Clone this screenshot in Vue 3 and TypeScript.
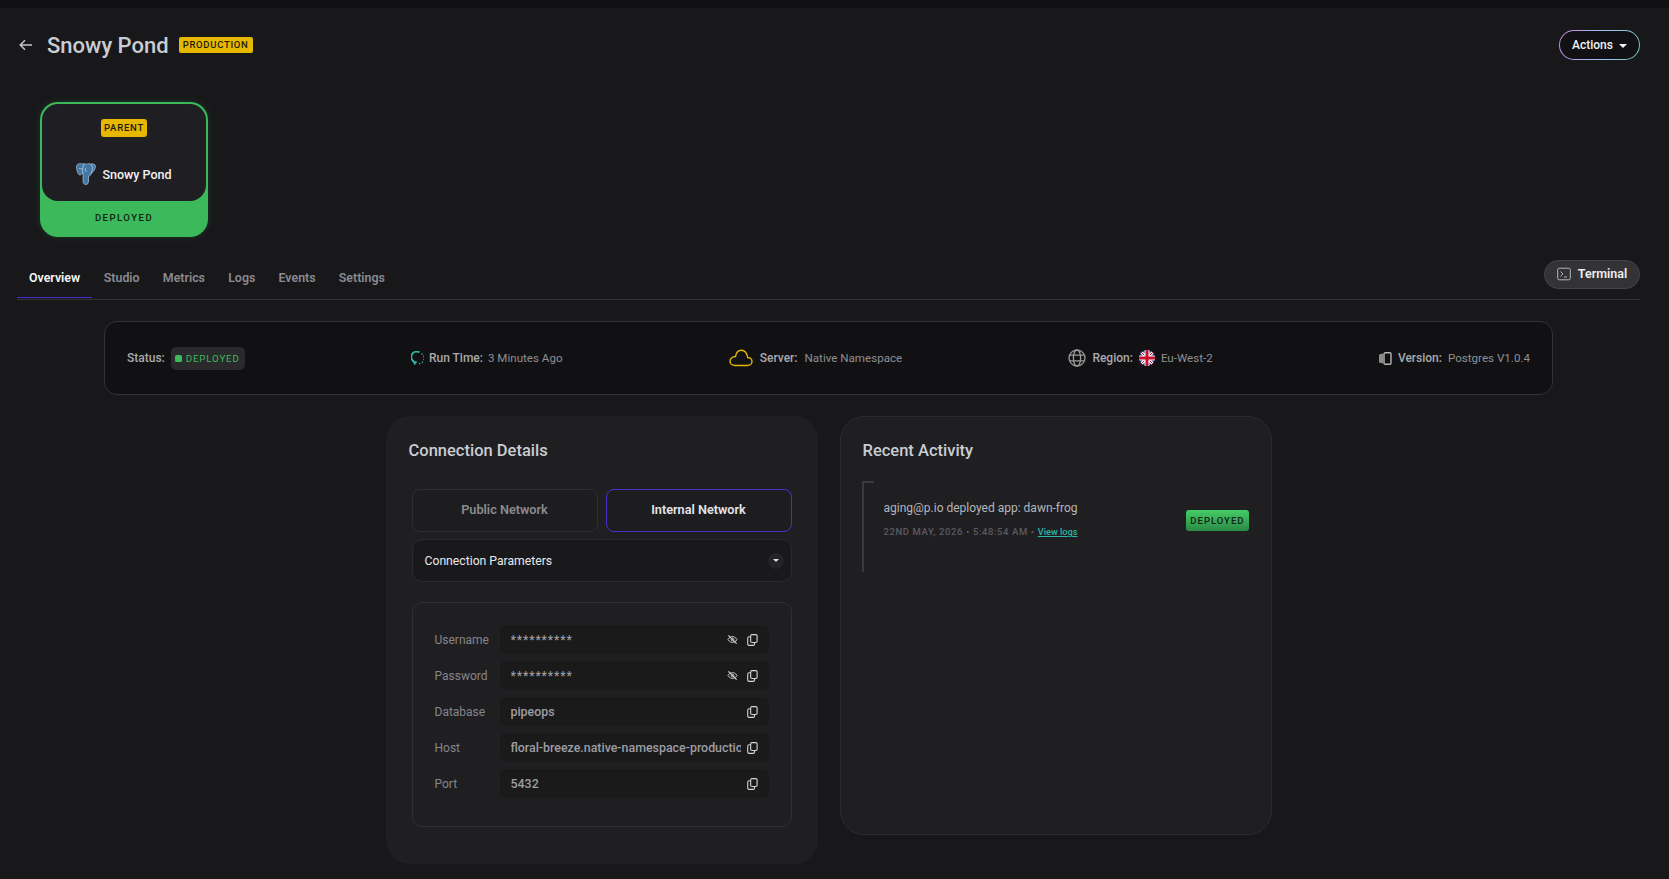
<template>
  <div class="page">
    <div class="topbar"></div>
    <div class="content">
      <header class="head">
        <svg class="back" viewBox="0 0 14 12" fill="none" stroke="#c4c4c8" stroke-width="1.5">
          <path d="M13 6H1.5M6 1.2 1.2 6 6 10.8" />
        </svg>
        <h1 class="head__title">Snowy Pond</h1>
        <span class="tag tag--prod">PRODUCTION</span>
        <button class="actions">Actions <span class="caret"></span></button>
      </header>

      <div class="node">
        <div class="node__inner">
          <span class="tag tag--parent">PARENT</span>
          <div class="node__name">
            <svg class="pg" viewBox="0 0 20 22">
              <path
                d="M6 1C3 0 .5 1 .5 4c0 3 1.500 7 3 8 1 .5 2-1 2.500-2l1 1v7c0 2.500 1.300 3.500 3 3.500s2.500-1.500 2.500-3.500v-5c1.500 0 2.500-1 2.300-2 1.700-1.500 4.700-4.500 4.700-7.500 0-2.500-2.500-3-5-2.500-1.500-.5-3-.5-4 .2C9 .5 7.500.7 6 1z"
                fill="#3f77a8"
                stroke="#c9d6e2"
                stroke-width=".6"
              />
              <path
                d="M8.500 1.200C6.800 3 6.300 6 6.600 8.500c.1 1 .2 1.500.4 2.500M14.500 1c2 1.500 2.300 4.300 1.500 6.800-.4 1.200-1.200 2.200-1.200 3.200M10.500 5c-1 .2-1.500 1-1.300 2.300.2 1 1 1.300 1.800 1M3 5.500c1 .5 2 .5 3 .2"
                fill="none"
                stroke="#e4ebf1"
                stroke-width=".6"
              />
            </svg>
            <span>Snowy Pond</span>
          </div>
        </div>
        <div class="node__status">DEPLOYED</div>
      </div>

      <div class="tabs">
        <a v-for="t in tabs" :key="t" class="tab" :class="{ 'tab--on': t === 'Overview' }">{{ t }}</a>
        <button class="terminal">
          <svg viewBox="0 0 14 14" width="14" height="14" fill="none" stroke="#b5b5b8" stroke-width="1">
            <rect x=".7" y="1.200" width="12.600" height="11.600" rx="1.500" />
            <path d="M3.500 4.500 6 7l-2.500 2.500M7 10h3" />
          </svg>
          Terminal
        </button>
      </div>

      <section class="status">
        <div class="status__item">
          <b>Status:</b>
          <span class="pill"><i></i>DEPLOYED</span>
        </div>
        <div class="status__item status__item--run">
          <svg viewBox="0 0 13 15" width="13" height="15" fill="none">
            <path d="M8.500 1.300A5.400 5.400 0 0 0 3 10.800" stroke="#2fb5a5" stroke-width="1.800" />
            <path d="M1 9.600 3.600 14.300 6.400 10.800z" fill="#2fb5a5" />
            <path d="M10.500 2.600A5.400 5.400 0 0 1 7.300 12.600" stroke="#2fb5a5" stroke-width="1.300" stroke-dasharray="1.400 1.600" />
          </svg>
          <b>Run Time:</b><span>3 Minutes Ago</span>
        </div>
        <div class="status__item status__item--cloud">
          <svg viewBox="0 0 24 18" width="24" height="18" fill="none" stroke="#e6b800" stroke-width="1.400">
            <path d="M6 16.500h12.500c2.500 0 4.500-1.800 4.500-4 0-2.300-2-4-4.300-4C17.900 4 15.300 1.200 12.500 1.200 9.300 1.200 7 4 6.500 7.500 3.300 7.700 1 9.700 1 12.300c0 2.400 2.200 4.200 5 4.200z" />
          </svg>
          <b>Server:</b><span>Native Namespace</span>
        </div>
        <div class="status__item">
          <svg viewBox="0 0 18 18" width="18" height="18" fill="none" stroke="#9a9a9a" stroke-width="1.300">
            <circle cx="9" cy="9" r="8" />
            <ellipse cx="9" cy="9" rx="3.600" ry="8" />
            <path d="M1.500 6.200h15M1.500 11.800h15" />
          </svg>
          <b>Region:</b>
          <svg class="flag" viewBox="0 0 16 16" width="16" height="16">
            <defs>
              <clipPath id="flagc"><circle cx="8" cy="8" r="8" /></clipPath>
            </defs>
            <g clip-path="url(#flagc)">
              <rect width="16" height="16" fill="#1c3578" />
              <path d="M0 0 16 16M16 0 0 16" stroke="#fff" stroke-width="3" />
              <path d="M0 0 16 16M16 0 0 16" stroke="#c8102e" stroke-width="1" />
              <path d="M8 0v16M0 8h16" stroke="#fff" stroke-width="5" />
              <path d="M8 0v16M0 8h16" stroke="#c8102e" stroke-width="3" />
            </g>
          </svg>
          <span>Eu-West-2</span>
        </div>
        <div class="status__item">
          <svg viewBox="0 0 13 13" width="13" height="13" fill="none">
            <rect x="5" y=".8" width="7" height="11.400" rx="1.200" stroke="#b5b5b5" stroke-width="1.400" />
            <path d="M0 2.500 4 1.500v10l-4-1z" fill="#8c8c8c" />
          </svg>
          <b>Version:</b><span>Postgres V1.0.4</span>
        </div>
      </section>

      <div class="cards">
        <section class="card card--conn">
          <h2 class="card__title">Connection Details</h2>
          <div class="net">
            <button class="net__btn">Public Network</button>
            <button class="net__btn net__btn--on">Internal Network</button>
          </div>
          <div class="params">
            <span>Connection Parameters</span>
            <span class="params__drop"><span class="caret caret--sm"></span></span>
          </div>
          <div class="creds">
            <div v-for="r in rows" :key="r.label" class="cred">
              <label>{{ r.label }}</label>
              <div class="cred__field">
                <span class="cred__val" :class="{ 'cred__val--mask': r.hidden }">{{ r.value }}</span>
                <svg v-if="r.hidden" class="cred__eye" viewBox="0 0 12 12" fill="none" stroke="#cfcfcf" stroke-width="1">
                  <path d="M1 6s1.800-3.200 5-3.200S11 6 11 6 9.200 9.200 6 9.200 1 6 1 6z" />
                  <circle cx="6" cy="6" r="1.500" />
                  <path d="M1.500 1.500l9 9" stroke-width="1.300" />
                </svg>
                <svg class="cred__copy" viewBox="0 0 12 13" fill="none" stroke="#d5d5d5" stroke-width="1.200">
                  <rect x="4" y=".6" width="7" height="8.600" rx="1.300" />
                  <path d="M4 3H2.300C1.300 3 .8 3.500 .8 4.500v6.400c0 1 .5 1.500 1.500 1.500h4.400c1 0 1.500-.5 1.500-1.500V9.200" />
                </svg>
              </div>
            </div>
          </div>
        </section>

        <section class="card card--activity">
          <h2 class="card__title">Recent Activity</h2>
          <div class="event">
            <div class="event__body">
              <p class="event__msg">aging@p.io deployed app: dawn-frog</p>
              <p class="event__meta">22ND MAY, 2026 • 5:48:54 AM <em>•</em> <a>View logs</a></p>
            </div>
            <span class="deployed">DEPLOYED</span>
          </div>
        </section>
      </div>
    </div>
  </div>
</template>

<script setup lang="ts">
interface CredRow {
  label: string;
  value: string;
  hidden?: boolean;
}

const tabs: string[] = ['Overview', 'Studio', 'Metrics', 'Logs', 'Events', 'Settings'];

const rows: CredRow[] = [
  { label: 'Username', value: '**********', hidden: true },
  { label: 'Password', value: '**********', hidden: true },
  { label: 'Database', value: 'pipeops' },
  { label: 'Host', value: 'floral-breeze.native-namespace-production' },
  { label: 'Port', value: '5432' },
];
</script>

<style>
html,
body {
  background: #18181b;
}
</style>

<style scoped>
.page {
  min-height: 879px;
  background: #18181b;
  font-family: Roboto, "Liberation Sans", sans-serif;
  color: #ccc;
}
.topbar {
  height: 8px;
  background: #111113;
}
.content {
  padding: 0 29px 0 17px;
}
button {
  font-family: inherit;
  cursor: pointer;
}
.head {
  display: flex;
  align-items: center;
  padding-top: 22px;
  height: 52px;
  box-sizing: border-box;
}
.back {
  width: 14px;
  height: 12px;
  margin: 0 14px 0 2px;
}
.head__title {
  margin: 0 10px 0 0;
  font-size: 22px;
  font-weight: 500;
  color: #c9cdd3;
}
.tag {
  background: #e6b800;
  color: #1c1a10;
  border-radius: 2px;
  font-size: 9.500px;
  font-weight: 500;
  letter-spacing: 0.700px;
  line-height: 16px;
  padding: 0 4px;
}
.actions {
  margin-left: auto;
  width: 81px;
  height: 30px;
  border-radius: 15px;
  border: 1px solid transparent;
  background: linear-gradient(#111113, #111113) padding-box,
    linear-gradient(100deg, #c58be8, #9cc4ee 60%, #6ec6b8) border-box;
  color: #f2f2f2;
  font-size: 12px;
  font-weight: 500;
  padding: 0;
}
.caret {
  display: inline-block;
  margin-left: 3px;
  vertical-align: middle;
  border: 4px solid transparent;
  border-top-color: #f2f2f2;
  border-bottom: 0;
}
.caret--sm {
  margin: 0;
  border-width: 3px;
  border-bottom: 0;
  border-top-color: #ddd;
}
.node {
  margin: 42px 0 0 23px;
  width: 168px;
  height: 135px;
  box-sizing: border-box;
  background: #3cb95a;
  border-radius: 18px;
  padding: 2px 2px 0;
  box-shadow: 0 0 6px rgba(60, 185, 90, 0.2);
}
.node__inner {
  height: 97px;
  box-sizing: border-box;
  background: #1f1f23;
  border-radius: 16px;
  padding-top: 12px;
  text-align: center;
}
.tag--parent {
  display: inline-block;
  line-height: 18px;
  border-radius: 3px;
  font-size: 9.500px;
  letter-spacing: 0.800px;
  padding: 0 3px;
}
.node__name {
  display: flex;
  justify-content: center;
  align-items: center;
  gap: 6px;
  margin-top: 26px;
  font-size: 12.500px;
  font-weight: 500;
  color: #f2f2f2;
}
.pg {
  width: 20px;
  height: 22px;
}
.node__status {
  text-align: center;
  font-size: 9.500px;
  font-weight: 500;
  letter-spacing: 1.500px;
  color: #10240f;
  line-height: 33px;
}
.tabs {
  display: flex;
  align-items: flex-start;
  margin-top: 23px;
  height: 40px;
  box-sizing: border-box;
  border-bottom: 1px solid #333336;
}
.tab {
  height: 38px;
  box-sizing: border-box;
  padding: 10px 11.600px 0;
  font-size: 12.400px;
  line-height: 16px;
  font-weight: 600;
  color: #8a8a90;
}
.tab--on {
  padding: 10px 12px 0;
  color: #f5f5f5;
  border-bottom: 1px solid #4a2fd0;
}
.terminal {
  margin-left: auto;
  display: flex;
  align-items: center;
  gap: 7px;
  width: 96px;
  height: 29px;
  justify-content: center;
  border-radius: 15px;
  border: 1px solid #46464a;
  background: #333336;
  color: #eee;
  font-size: 12.500px;
  line-height: 14px;
  font-weight: 600;
  padding: 0 0 1px;
}
.status {
  margin: 21px 0 0 87px;
  width: 1449px;
  height: 74px;
  box-sizing: border-box;
  border: 1px solid #333336;
  border-radius: 13px;
  background: #111113;
  padding: 0 22px;
  display: flex;
  align-items: center;
  justify-content: space-between;
  font-size: 11.600px;
}
.status__item {
  display: flex;
  align-items: center;
  gap: 6px;
  color: #8f8f93;
}
.status__item--run {
  gap: 5px;
}
.status__item--cloud {
  gap: 7px;
}
.status__item b {
  font-size: 12px;
  font-weight: 500;
  color: #a9a9ad;
}
.flag {
  flex: none;
}
.pill {
  display: flex;
  align-items: center;
  gap: 4px;
  background: #2a2a2c;
  border-radius: 5px;
  height: 23px;
  padding: 0 5px 0 4px;
  color: #3cb95a;
  font-size: 9.800px;
  letter-spacing: 0.800px;
}
.pill i {
  width: 7px;
  height: 7px;
  border-radius: 1.500px;
  background: #3cb95a;
}
.cards {
  display: flex;
  justify-content: center;
  align-items: flex-start;
  gap: 22px;
  margin-top: 21px;
}
.card {
  width: 432px;
  box-sizing: border-box;
  background: #1f1f22;
  border-radius: 24px;
  padding-top: 23px;
}
.card--conn {
  height: 448px;
  padding-left: 26px;
  padding-right: 26px;
}
.card--activity {
  height: 419px;
  border: 1px solid #2b2b2f;
  padding: 22px 22px 0 22px;
}
.card__title {
  margin: 0;
  font-size: 16.500px;
  line-height: 24px;
  font-weight: 500;
  color: #c9cdd3;
}
.card--conn .card__title {
  margin-left: -3px;
}
.net {
  display: grid;
  grid-template-columns: 186px 186px;
  gap: 8px;
  margin-top: 26px;
}
.net__btn {
  height: 43px;
  border-radius: 8px;
  border: 1px solid #2e2e32;
  background: #1d1d20;
  color: #8a8a8e;
  font-size: 12.700px;
  line-height: 14px;
  font-weight: 600;
  padding: 0 0 1px;
}
.net__btn--on {
  border-color: #4a2fd0;
  color: #e6e6e8;
}
.params {
  margin-top: 7px;
  height: 43px;
  box-sizing: border-box;
  border: 1px solid #2b2b2f;
  border-radius: 10px;
  background: #19191c;
  display: flex;
  align-items: center;
  justify-content: space-between;
  padding: 0 7px 0 12px;
  font-size: 12.200px;
  font-weight: 400;
  color: #e8e8ea;
}
.params__drop {
  width: 16px;
  height: 16px;
  border-radius: 50%;
  background: #242427;
  display: flex;
  align-items: center;
  justify-content: center;
}
.creds {
  margin-top: 20px;
  height: 225px;
  box-sizing: border-box;
  border: 1px solid #2f2f33;
  border-radius: 10px;
  padding: 22px 22px 0;
  display: flex;
  flex-direction: column;
  gap: 7px;
}
.cred {
  display: flex;
  align-items: center;
}
.cred label {
  width: 65px;
  font-size: 12px;
  color: #85858a;
}
.cred__field {
  flex: 1;
  min-width: 0;
  height: 29px;
  box-sizing: border-box;
  background: #1a1a1b;
  border-radius: 6px;
  display: flex;
  align-items: center;
  padding: 0 11px;
}
.cred__val {
  flex: 1;
  min-width: 0;
  overflow: hidden;
  white-space: nowrap;
  font-size: 12.400px;
  font-weight: 500;
  color: #9d9da2;
}
.cred__val--mask {
  font-size: 12px;
  letter-spacing: 0.900px;
}
.cred__eye {
  width: 11px;
  height: 11px;
  margin-right: 9px;
}
.cred__copy {
  flex: none;
  width: 11px;
  height: 12px;
  margin-left: 6px;
}
.cred__eye + .cred__copy {
  margin-left: 0;
}
.event {
  position: relative;
  margin: 18px 0 0 -1px;
  height: 91px;
  box-sizing: border-box;
  border-left: 2px solid #3a3a3e;
  padding: 0 0 0 20px;
  display: flex;
  justify-content: space-between;
}
.event::before {
  content: "";
  position: absolute;
  left: 0;
  top: 0;
  width: 10px;
  height: 2px;
  background: #3a3a3e;
}
.event__msg {
  margin: 18px 0 0;
  font-size: 12px;
  line-height: 18px;
  color: #b5b5ba;
}
.event__meta {
  margin: 8px 0 0;
  font-size: 9.500px;
  line-height: 14px;
  letter-spacing: 0.600px;
  color: #5b5b60;
  font-weight: 500;
}
.event__meta em {
  font-style: normal;
}
.event__meta a {
  color: #2fb5a5;
  text-decoration: underline;
  letter-spacing: 0;
  font-size: 9.200px;
}
.deployed {
  margin-top: 29px;
  height: 21px;
  line-height: 21px;
  padding: 0 4px;
  border-radius: 3px;
  background: linear-gradient(#45cc66, #2a8a45);
  color: #0f2415;
  font-size: 9.500px;
  font-weight: 500;
  letter-spacing: 1px;
}
</style>
